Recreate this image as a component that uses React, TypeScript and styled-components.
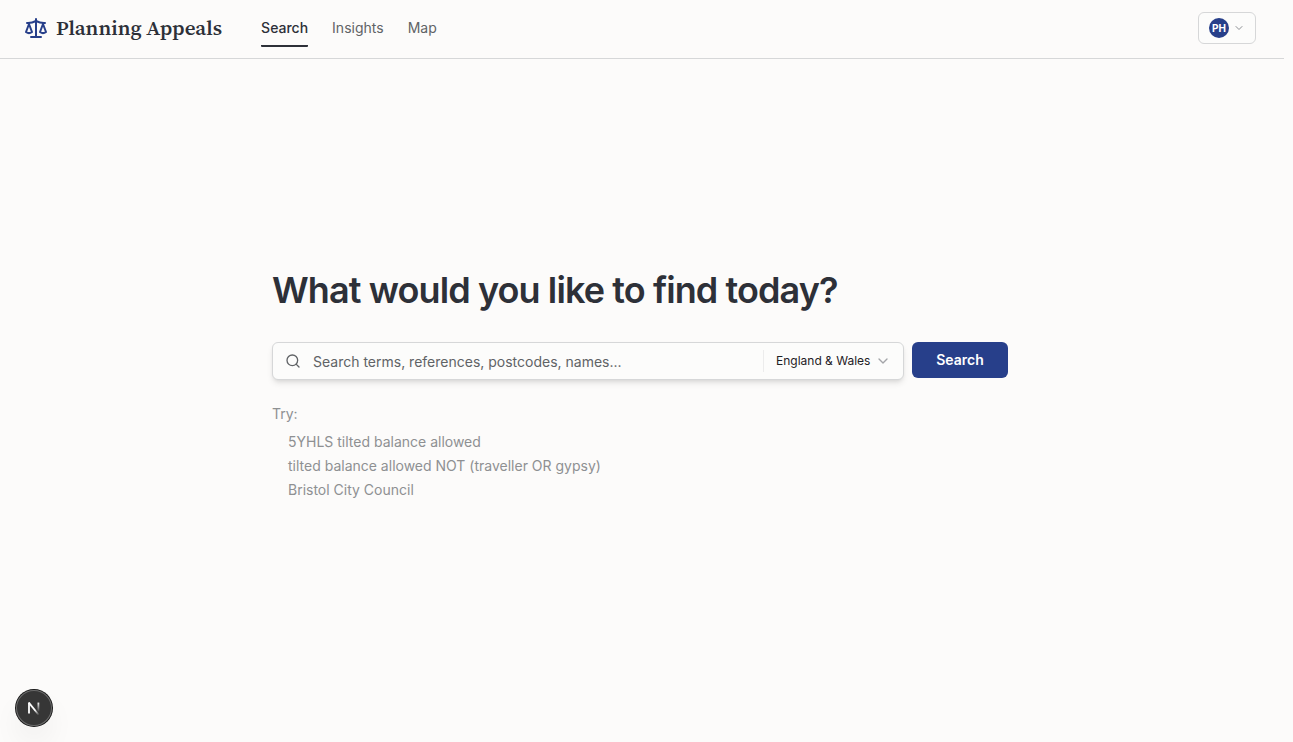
import React from "react";
import styled, { createGlobalStyle } from "styled-components";
import { ChevronDown, Scale, Search } from "lucide-react";

const Global = createGlobalStyle`
  *, *::before, *::after { box-sizing: border-box; }
  body {
    margin: 0;
    background: #fcfbfa;
    color: #2d3038;
    font-family: Inter, "Liberation Sans", sans-serif;
    font-size: 14px;
    line-height: 20px;
  }
  button, input, select { font: inherit; color: inherit; }
`;

const Page = styled.div`
  min-height: 100vh;
  margin-right: 9px;
  display: flex;
  flex-direction: column;
`;

const Header = styled.header`
  display: flex;
  align-items: center;
  height: 59px;
  padding: 0 28px 3px 24px;
  border-bottom: 1px solid #d6d7d8;
`;

const Brand = styled.a`
  display: flex;
  align-items: center;
  gap: 8px;
  margin-right: 39px;
  color: #2d3038;
  text-decoration: none;
  font-family: "Source Serif 4", "Source Serif Pro", "Liberation Serif", serif;
  font-size: 21px;
  line-height: 28px;
  font-weight: 600;
  white-space: nowrap;
  svg { color: #273f8a; }
`;

const Nav = styled.nav`
  display: flex;
  gap: 24px;
`;

const NavLink = styled.a<{ $active?: boolean }>`
  padding: 9px 0 7px;
  border-bottom: 2px solid ${(p) => (p.$active ? "#2d3038" : "transparent")};
  border-radius: 1px;
  color: ${(p) => (p.$active ? "#2d3038" : "#606366")};
  font-weight: ${(p) => (p.$active ? 500 : 400)};
  text-decoration: none;
`;

const AccountButton = styled.button`
  display: flex;
  align-items: center;
  gap: 4px;
  height: 32px;
  width: 58px;
  margin-left: auto;
  padding: 0 10px;
  border: 1px solid #d6d7d8;
  border-radius: 6px;
  background: #fcfcfb;
  color: #8c8f93;
`;

const Avatar = styled.span`
  display: grid;
  place-items: center;
  flex: none;
  width: 20px;
  height: 20px;
  border-radius: 50%;
  background: #273f8a;
  color: #fff;
  font-size: 10px;
  line-height: 12px;
  font-weight: 700;
`;

const Main = styled.main`
  flex: 1;
  display: flex;
  flex-direction: column;
  justify-content: center;
  width: 100%;
  max-width: 772px;
  margin: 0 auto;
  padding: 0 20px 30px 16px;
`;

const Title = styled.h1`
  margin: 0 0 32px;
  font-size: 36px;
  line-height: 40px;
  font-weight: 600;
  letter-spacing: -0.025em;
`;

const SearchForm = styled.form`
  display: flex;
  align-items: flex-start;
  gap: 8px;
`;

const SearchBox = styled.div`
  flex: 1;
  min-width: 0;
  display: flex;
  align-items: center;
  height: 38px;
  padding: 0 12px;
  border: 1px solid #d6d7d8;
  border-radius: 6px;
  background: #fcfcfb;
  box-shadow: 0 4px 6px -1px rgba(0, 0, 0, 0.1), 0 2px 4px -2px rgba(0, 0, 0, 0.1);
  color: #606366;
  svg { flex: none; }
`;

const SearchInput = styled.input`
  flex: 1;
  min-width: 0;
  height: 36px;
  margin-left: 12px;
  padding: 2px 0 0;
  border: 0;
  outline: 0;
  background: transparent;
  color: #2d3038;
  &::placeholder { color: #606366; opacity: 1; }
`;

const RegionField = styled.div`
  display: flex;
  align-items: center;
  gap: 4px;
  padding-left: 12px;
  border-left: 1px solid #ececec;
  color: #a3a5a8;
`;

const RegionSelect = styled.select`
  appearance: none;
  height: 22px;
  padding: 0;
  border: 0;
  outline: 0;
  background: transparent;
  color: #1f2125;
  font-size: 12px;
`;

const SubmitButton = styled.button`
  width: 96px;
  height: 36px;
  padding: 0;
  border: 0;
  border-radius: 6px;
  background: #273f8a;
  color: #fff;
  font-weight: 600;
`;

const Suggestions = styled.section`
  margin-top: 24px;
  color: #8e9092;
`;

const SuggestionLabel = styled.p`
  margin: 0 0 6px;
`;

const SuggestionList = styled.ul`
  margin: 0;
  padding: 0 0 0 16px;
  list-style: none;
`;

const SuggestionLink = styled.a`
  display: block;
  line-height: 24px;
  color: inherit;
  text-decoration: none;
`;

const DevButton = styled.button`
  position: fixed;
  left: 16px;
  bottom: 16px;
  display: grid;
  place-items: center;
  width: 36px;
  height: 36px;
  padding: 0;
  border: 0;
  border-radius: 50%;
  background: #363636;
  box-shadow: 0 0 0 1px #171717, inset 0 0 0 1px #6b6b6b, 0 16px 32px -8px rgba(0, 0, 0, 0.16);
`;

const NextIcon = () => (
  <svg width="14" height="14" viewBox="0 0 14 14" fill="none" aria-hidden="true">
    <defs>
      <linearGradient id="diagonal" x1="8" y1="9" x2="12" y2="14" gradientUnits="userSpaceOnUse">
        <stop stopColor="#fff" />
        <stop offset="1" stopColor="#fff" stopOpacity="0" />
      </linearGradient>
      <linearGradient id="upright" x1="11" y1="1" x2="11" y2="11" gradientUnits="userSpaceOnUse">
        <stop stopColor="#fff" />
        <stop offset="1" stopColor="#fff" stopOpacity="0" />
      </linearGradient>
    </defs>
    <path d="M1.8 1.6L12 14.2" stroke="url(#diagonal)" strokeWidth="1.8" />
    <path d="M2 12.4V1.6" stroke="#fff" strokeWidth="1.8" />
    <path d="M11.4 1.6V10.6" stroke="url(#upright)" strokeWidth="1.8" />
  </svg>
);

const suggestions = [
  "5YHLS tilted balance allowed",
  "tilted balance allowed NOT (traveller OR gypsy)",
  "Bristol City Council",
];

export default function App() {
  return (
    <>
      <Global />
      <Page>
        <Header>
          <Brand href="#"><Scale size={24} aria-hidden="true" />Planning Appeals</Brand>
          <Nav aria-label="Main">
            <NavLink href="#search" $active aria-current="page">Search</NavLink>
            <NavLink href="#insights">Insights</NavLink>
            <NavLink href="#map">Map</NavLink>
          </Nav>
          <AccountButton type="button" aria-label="Account menu">
            <Avatar>PH</Avatar>
            <ChevronDown size={12} />
          </AccountButton>
        </Header>
        <Main>
          <Title>What would you like to find today?</Title>
          <SearchForm role="search" onSubmit={(e) => e.preventDefault()}>
            <SearchBox>
              <Search size={16} strokeWidth={2} aria-hidden="true" />
              <SearchInput type="text" aria-label="Search appeals" placeholder="Search terms, references, postcodes, names..." />
              <RegionField>
                <RegionSelect aria-label="Region" defaultValue="ew">
                  <option value="ew">England &amp; Wales</option>
                </RegionSelect>
                <ChevronDown size={16} strokeWidth={2} aria-hidden="true" />
              </RegionField>
            </SearchBox>
            <SubmitButton type="submit">Search</SubmitButton>
          </SearchForm>
          <Suggestions aria-label="Example searches">
            <SuggestionLabel>Try:</SuggestionLabel>
            <SuggestionList>
              {suggestions.map((text) => (
                <li key={text}><SuggestionLink href="#search">{text}</SuggestionLink></li>
              ))}
            </SuggestionList>
          </Suggestions>
        </Main>
      </Page>
      <DevButton type="button" aria-label="Open developer tools"><NextIcon /></DevButton>
    </>
  );
}
